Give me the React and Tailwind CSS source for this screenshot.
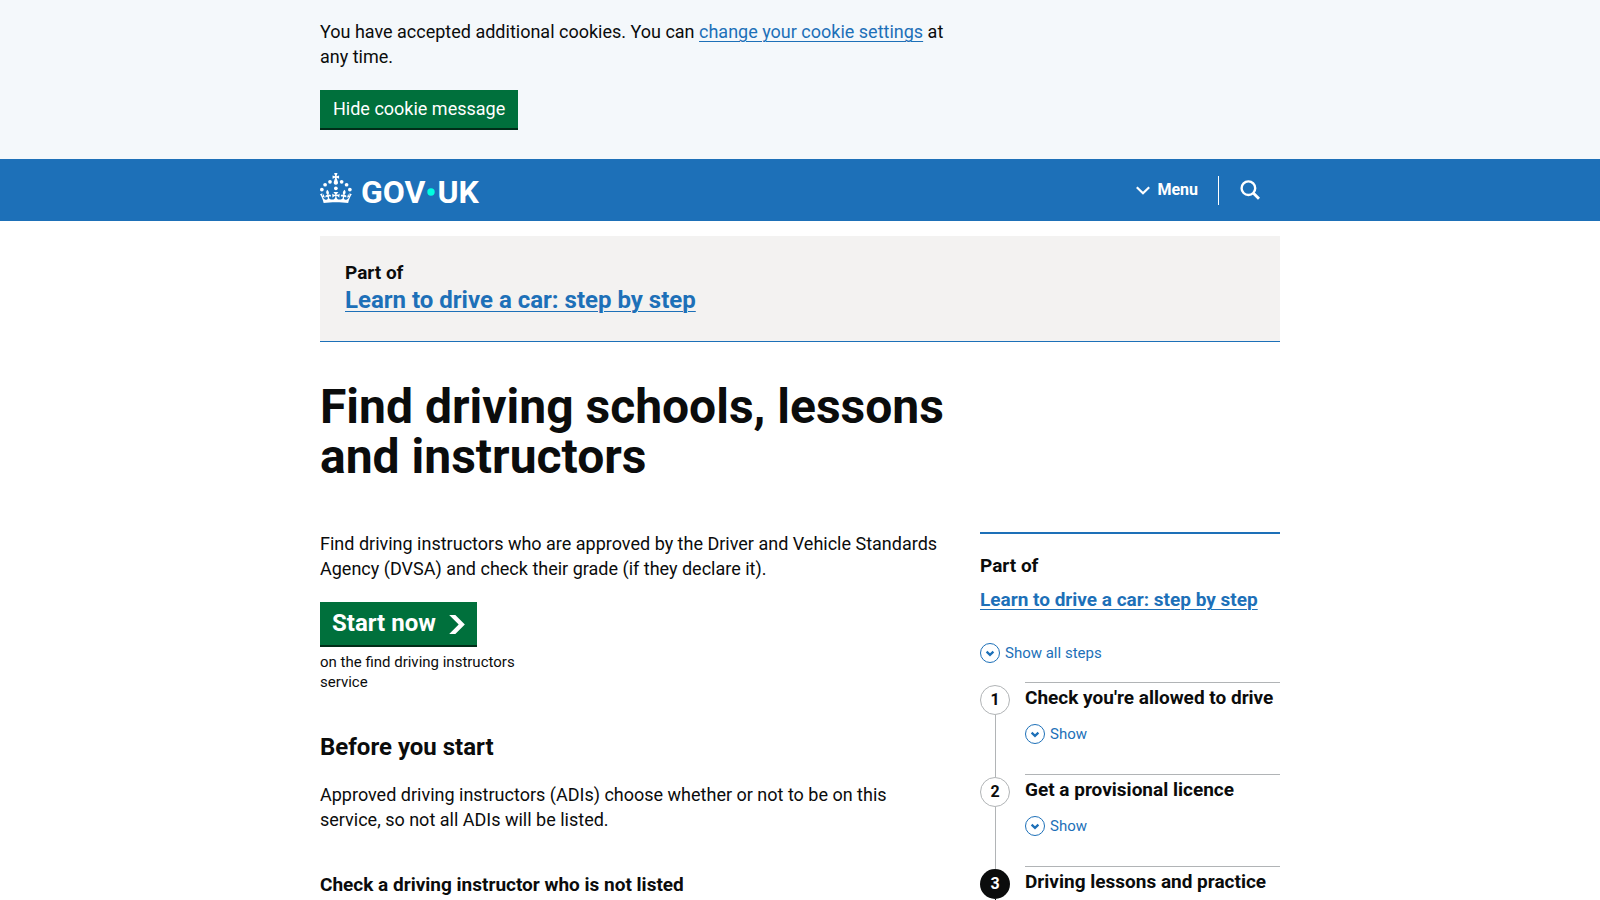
const linkClass = "text-[#1d70b8] underline decoration-1 underline-offset-3";

function CrownLogo() {
  return (
    <svg className="mb-1 h-[30px] w-8" viewBox="0 0 64 60" fill="currentColor" aria-hidden="true">
      <circle cx="20" cy="17.6" r="3.7" />
      <circle cx="10.2" cy="23.5" r="3.7" />
      <circle cx="3.7" cy="33.2" r="3.7" />
      <circle cx="31.7" cy="30.6" r="3.7" />
      <circle cx="43.3" cy="17.6" r="3.7" />
      <circle cx="53.2" cy="23.5" r="3.7" />
      <circle cx="59.7" cy="33.2" r="3.7" />
      <path d="M33.1,9.8c.2-.1.3-.3.5-.5l4.6,2.4v-6.8l-4.6,1.5c-.1-.2-.3-.3-.5-.5l1.9-5.9h-6.7l1.9,5.9c-.2.1-.3.3-.5.5l-4.6-1.5v6.8l4.6-2.4c.1.2.3.3.5.5l-2.6,8c-.9,2.8,1.2,5.7,4.1,5.7h0c3,0,5.1-2.9,4.1-5.7l-2.6-8ZM37,37.9s-3.4,3.8-4.1,6.1c2.2,0,4.2-.5,6.4-2.8l-.7,8.5c-2-2.8-4.4-4.1-5.7-3.8.1,3.1.5,6.7,5.8,7.2,3.7.3,6.7-1.5,7-3.8.4-2.6-2-4.3-3.7-1.6-1.4-4.5,2.4-6.1,4.9-3.2-1.9-4.5-1.8-7.7,2.4-10.9,3,4,2.6,7.3-1.2,11.1,2.4-1.3,6.2,0,4,4.6-1.2-2.8-3.7-2.2-4.2.2-.3,1.7.7,3.7,3,4.2,1.9.3,4.7-.9,7-5.9-1.3,0-2.4.7-3.9,1.7l2.4-8c.6,2.3,1.4,3.7,2.2,4.5.6-1.6.5-2.8,0-5.3l5,1.8c-2.6,3.6-5.2,8.7-7.3,17.5-7.4-1.1-15.7-1.7-24.5-1.7h0c-8.8,0-17.1.6-24.5,1.7-2.1-8.9-4.7-13.9-7.3-17.5l5-1.8c-.5,2.5-.6,3.7,0,5.3.8-.8,1.6-2.3,2.2-4.5l2.4,8c-1.5-1-2.6-1.7-3.9-1.7,2.3,5,5.2,6.2,7,5.9,2.3-.4,3.3-2.4,3-4.2-.5-2.4-3-3.1-4.2-.2-2.2-4.6,1.6-6,4-4.6-3.7-3.7-4.2-7.1-1.2-11.1,4.2,3.2,4.3,6.4,2.4,10.9,2.5-2.8,6.3-1.3,4.9,3.2-1.8-2.7-4.1-1-3.7,1.6.3,2.3,3.3,4.1,7,3.8,5.4-.5,5.7-4.2,5.8-7.2-1.3-.2-3.7,1-5.7,3.8l-.7-8.5c2.2,2.3,4.2,2.7,6.4,2.8-.7-2.3-4.1-6.1-4.1-6.1h10.6,0Z" />
    </svg>
  );
}

function CircleChevron() {
  return (
    <svg className="size-5 shrink-0" viewBox="0 0 20 20" fill="none" stroke="currentColor" aria-hidden="true">
      <circle cx="10" cy="10" r="9.5" />
      <path d="M6.6 8.6 10 11.9l3.4-3.3" strokeWidth="2.2" />
    </svg>
  );
}

function Step({ number, title, current, last }) {
  return (
    <li className="flex gap-[15px]">
      <div className="flex w-[30px] shrink-0 flex-col items-center">
        <span
          className={
            current
              ? "mt-[3px] flex size-[30px] shrink-0 items-center justify-center rounded-full bg-[#0b0c0c] text-base font-bold text-white"
              : "mt-[3px] flex size-[30px] shrink-0 items-center justify-center rounded-full border border-[#b1b4b6] bg-white text-base font-bold"
          }
        >
          {number}
        </span>
        <span className={current ? "w-px grow bg-[#0b0c0c]" : "-mb-[3px] w-px grow bg-[#b1b4b6]"} />
      </div>
      <div className={last ? "grow border-t border-[#b1b4b6] pt-[2px] pb-2" : "grow border-t border-[#b1b4b6] pt-[2px] pb-[30px]"}>
        <h3 className="text-[19px] leading-[25px] font-bold whitespace-nowrap">{title}</h3>
        {!last && (
          <button type="button" className="mt-[14px] flex items-center gap-[5px] text-[15px] leading-5 text-[#1d70b8]">
            <CircleChevron />
            Show
          </button>
        )}
      </div>
    </li>
  );
}

export default function App() {
  return (
    <div className="bg-white font-['Roboto','Liberation_Sans',sans-serif] text-[18px] leading-[25px] text-[#0b0c0c]">
      <section className="bg-[#f4f8fb]" aria-label="Cookies on GOV.UK">
        <div className="mx-auto max-w-[960px] pt-[19px] pb-[29px]">
          <p className="max-w-[640px]">
            You have accepted additional cookies. You can{" "}
            <a href="#cookies" className={linkClass}>change your cookie settings</a> at any time.
          </p>
          <button type="button" className="mt-[21px] border-b-2 border-[#002d18] bg-[#00703c] px-[13px] py-[7px] leading-6 text-white">
            Hide cookie message
          </button>
        </div>
      </section>

      <header className="bg-[#1d70b8] text-white">
        <div className="mx-auto flex h-[62px] max-w-[960px] items-center justify-between">
          <a href="#home" className="flex items-center gap-[9px]" aria-label="GOV.UK">
            <CrownLogo />
            <span className="flex items-center pt-[3px] text-[32px] leading-8 font-bold">
              GOV
              <svg className="mx-[2px] size-2" viewBox="0 0 8 8" aria-hidden="true">
                <circle cx="4" cy="4" r="3.7" fill="#00ffe0" />
              </svg>
              UK
            </span>
          </a>
          <nav className="flex items-center">
            <button type="button" className="flex items-center gap-[7px] pr-5 text-base font-bold">
              <svg className="h-[9px] w-[14px]" viewBox="0 0 14 9" fill="none" stroke="currentColor" strokeWidth="2.2" aria-hidden="true">
                <path d="M.8 1.2 7 7.3l6.2-6.1" />
              </svg>
              Menu
            </button>
            <span className="h-[29px] w-px bg-white" />
            <button type="button" aria-label="Search" className="pr-5 pl-[21px]">
              <svg className="size-5" viewBox="0 0 20 20" fill="none" stroke="currentColor" strokeWidth="2.4" aria-hidden="true">
                <circle cx="8.4" cy="8.2" r="6.8" />
                <path d="m13.2 13 5.8 5.8" strokeWidth="2.9" />
              </svg>
            </button>
          </nav>
        </div>
      </header>

      <div className="mx-auto max-w-[960px] pt-[15px]">
        <div className="border-b border-[#1d70b8] bg-[#f3f2f1] px-[25px] pt-6 pb-[26px] font-bold">
          <p className="text-[19px]">Part of</p>
          <a href="#steps" className={`${linkClass} block text-2xl leading-[30px]`}>Learn to drive a car: step by step</a>
        </div>

        <main className="mt-10">
          <h1 className="max-w-[640px] text-5xl leading-[50px] font-bold">Find driving schools, lessons and instructors</h1>

          <div className="mt-[50px] flex items-start gap-[30px]">
            <div className="min-w-0 grow">
              <p className="-mt-px">
                Find driving instructors who are approved by the Driver and Vehicle Standards Agency (DVSA) and check
                their grade (if they declare it).
              </p>
              <a href="#start" className="mt-[21px] inline-flex items-center gap-[13px] border-b-2 border-[#002d18] bg-[#00703c] px-3 pt-[6px] pb-[7px] text-2xl leading-[30px] font-bold text-white">
                Start now
                <svg className="mt-[2px] h-[19px] w-4" viewBox="0 0 33 40" fill="currentColor" aria-hidden="true">
                  <path d="M0 0h13l20 20-20 20H0l20-20z" />
                </svg>
              </a>
              <p className="mt-[5px] max-w-56 text-[15px] leading-5">on the find driving instructors service</p>
              <h2 className="mt-10 text-2xl leading-[30px] font-bold">Before you start</h2>
              <p className="mt-5">
                Approved driving instructors (ADIs) choose whether or not to be on this service, so not all ADIs will
                be listed.
              </p>
              <h3 className="mt-10 text-[19px] font-bold">Check a driving instructor who is not listed</h3>
            </div>

            <aside className="w-[300px] shrink-0 border-t-2 border-[#1d70b8] pt-[19px]">
              <h2 className="text-[19px] font-bold">Part of</h2>
              <a href="#steps" className={`${linkClass} mt-[9px] block text-[19px] font-bold`}>Learn to drive a car: step by step</a>
              <button type="button" className="mt-[31px] flex items-center gap-[5px] text-[15px] leading-5 text-[#1d70b8]">
                <CircleChevron />
                Show all steps
              </button>
              <ol className="mt-[19px]">
                <Step number={1} title="Check you're allowed to drive" />
                <Step number={2} title="Get a provisional licence" />
                <Step number={3} title="Driving lessons and practice" current last />
              </ol>
            </aside>
          </div>
        </main>
      </div>
    </div>
  );
}
